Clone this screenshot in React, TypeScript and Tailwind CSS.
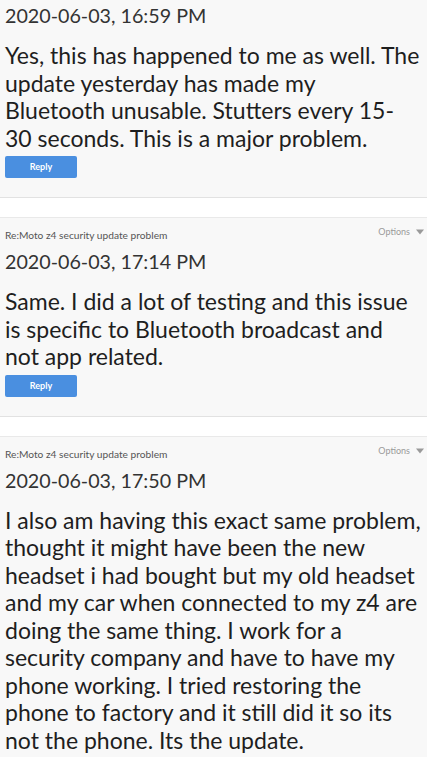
import React from 'react';

type Post = {
  id: number;
  subject: string;
  date: string;
  lines: string[];
};

// lines are kept as in the thread view, so the wrap matches the phone layout
const posts: Post[] = [
  {
    id: 1,
    subject: 'Re:Moto z4 security update problem',
    date: '2020-06-03, 16:59 PM',
    lines: [
      'Yes, this has happened to me as well. The',
      'update yesterday has made my',
      'Bluetooth unusable. Stutters every 15-',
      '30 seconds. This is a major problem.',
    ],
  },
  {
    id: 2,
    subject: 'Re:Moto z4 security update problem',
    date: '2020-06-03, 17:14 PM',
    lines: [
      'Same. I did a lot of testing and this issue',
      'is specific to Bluetooth broadcast and',
      'not app related.',
    ],
  },
  {
    id: 3,
    subject: 'Re:Moto z4 security update problem',
    date: '2020-06-03, 17:50 PM',
    lines: [
      'I also am having this exact same problem,',
      'thought it might have been the new',
      'headset i had bought but my old headset',
      'and my car when connected to my z4 are',
      'doing the same thing. I work for a',
      'security company and have to have my',
      'phone working. I tried restoring the',
      'phone to factory and it still did it so its',
      'not the phone. Its the update.',
    ],
  },
];

// first card is scrolled past its header, so it starts at the date
const PostCard: React.FC<{ post: Post; showReply: boolean; scrolled?: boolean }> = ({ post, showReply, scrolled }) => {
  return (
    <div
      className={`border-b border-b-[#e2e2e2] bg-[#f8f8f8] pl-[5px] pr-[3px] pb-[19px] ${
        scrolled ? 'pt-[4px]' : 'border-t border-t-[#e9e9e9] pt-[11px]'
      }`}
    >
      {!scrolled && (
        <div className="flex justify-between items-start mb-[9px]">
          <span className="text-[10.2px] leading-[12px] text-[#555555]">{post.subject}</span>
          <button className="flex items-center gap-[6px] -mt-[3px] text-[9px] leading-[12px] text-[#9a9a9a]">
            Options
            <svg width="8" height="6" viewBox="0 0 8 6">
              <path d="M0 0.5 H8 L4 5.5 Z" fill="#9a9a9a" />
            </svg>
          </button>
        </div>
      )}
      <div className="text-[19.7px] leading-[24px] text-[#333333]">{post.date}</div>
      <p className="mt-[14px] text-[23px] leading-[27.5px] text-[#1e1e1e]">
        {post.lines.map((line, i) => (
          <span key={i} className="block whitespace-nowrap">
            {line}
          </span>
        ))}
      </p>
      {showReply && (
        <button className="mt-[4px] block w-[72px] h-[22px] rounded-[2px] bg-[#4a8fe0] text-white text-[9px] font-bold">
          Reply
        </button>
      )}
    </div>
  );
};

export default function App() {
  return (
    <div className="bg-white min-h-screen overflow-hidden" style={{ fontFamily: 'Lato, "Open Sans", sans-serif' }}>
      <div className="flex flex-col gap-[19px]">
        {posts.map((post, i) => (
          <PostCard key={post.id} post={post} showReply={i < posts.length - 1} scrolled={i === 0} />
        ))}
      </div>
    </div>
  );
}
